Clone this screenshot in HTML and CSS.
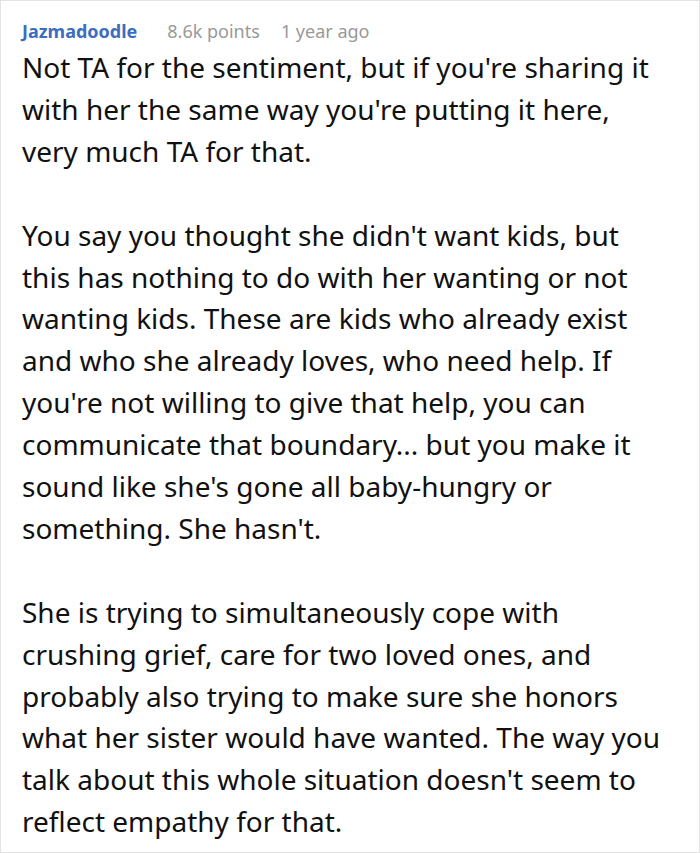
FILE: index.html
```html
<!DOCTYPE html>
<html>
<head>
<meta charset="utf-8">
<link rel="stylesheet" href="styles.css">
</head>
<body>
<div class="comment">
  <div class="meta">
    <span class="author">Jazmadoodle</span>
    <span class="points">8.6k points</span>
    <span class="time">1 year ago</span>
  </div>
  <div class="text">
    <p>Not TA for the sentiment, but if you're sharing it with her the same way you're putting it here, very much TA for that.</p>
    <p>You say you thought she didn't want kids, but this has nothing to do with her wanting or not wanting kids. These are kids who already exist and who she already loves, who need help. If you're not willing to give that help, you can communicate that boundary... but you make it sound like she's gone all baby-hungry or something. She hasn't.</p>
    <p>She is trying to simultaneously cope with crushing grief, care for two loved ones, and probably also trying to make sure she honors what her sister would have wanted. The way you talk about this whole situation doesn't seem to reflect empathy for that.</p>
  </div>
</div>
</body>
</html>
```
FILE: styles.css
```css
html, body {
  margin: 0;
  padding: 0;
  background: #ffffff;
}
.comment {
  box-sizing: border-box;
  width: 700px;
  height: 853px;
  border: 1px solid #e3e3e3;
  padding: 18px 36px 0 21px;
  font-family: "Noto Sans", sans-serif;
  overflow: hidden;
}
.meta {
  display: flex;
  align-items: baseline;
  font-size: 18px;
  line-height: 24px;
  margin-bottom: 4px;
}
.author {
  color: #3d6dbf;
  font-weight: 700;
  margin-right: 30px;
}
.points {
  color: #999999;
  margin-right: 21px;
}
.time {
  color: #999999;
}
.text {
  color: #111111;
  font-size: 28px;
  line-height: 41.9px;
}
.text p {
  margin: 0 0 41.9px 0;
}
```
